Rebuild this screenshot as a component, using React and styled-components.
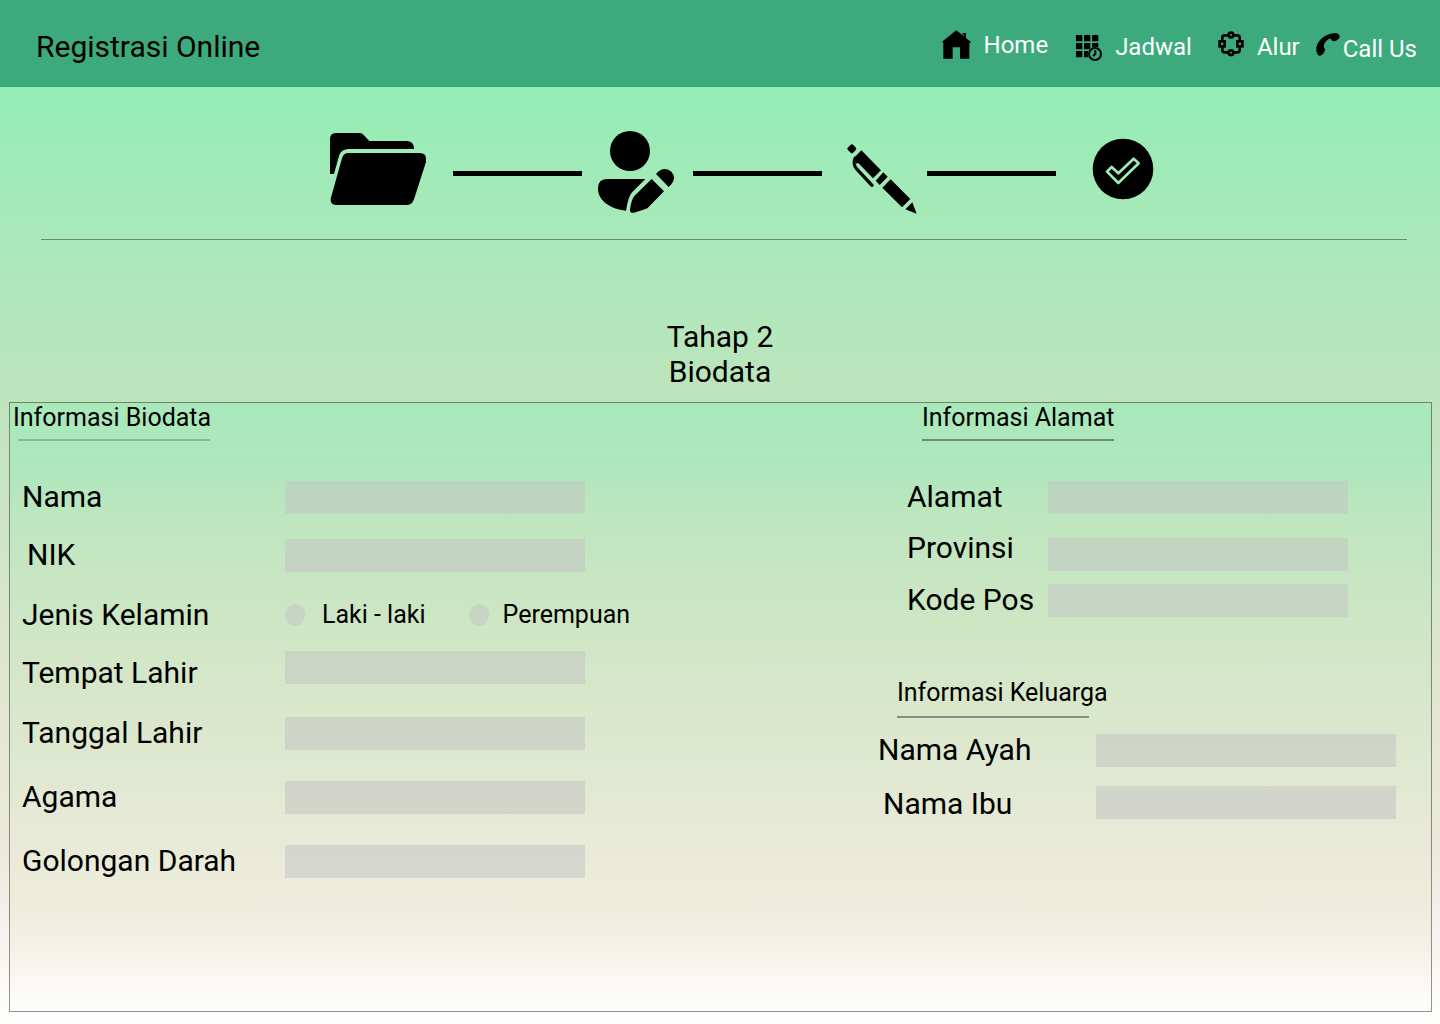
import React from "react";
import styled, { createGlobalStyle } from "styled-components";

const GlobalStyle = createGlobalStyle`
  *, *::before, *::after { box-sizing: border-box; }
  body { margin: 0; font-family: Roboto, "Liberation Sans", sans-serif; color: #000; }
`;

const Page = styled.div`
  display: flex;
  flex-direction: column;
  min-height: 100vh;
  padding-bottom: 12px;
  background: linear-gradient(180deg, #94edb5 8%, #c0e4bd 40%, #dbe6cd 62%, #ebe9d9 82%, #f6f4ee 92%, #fffffe 100%);
`;

const Header = styled.header`
  display: flex;
  align-items: center;
  justify-content: space-between;
  height: 87px;
  padding: 6px 23px 0 36px;
  background: #3daa7e;
`;

const Brand = styled.h1`
  margin: 0;
  font-size: 30px;
  line-height: 35px;
  font-weight: 400;
`;

const Nav = styled.nav`
  display: flex;
  gap: 28px;
  height: 34px;
`;

const NavGroup = styled.div`
  display: flex;
  gap: ${(p) => p.$gap}px;
`;

const NavLink = styled.a`
  display: flex;
  gap: ${(p) => (p.$tight ? 3 : 13)}px;
  color: #fff;
  font-size: 24px;
  line-height: 30px;
  text-decoration: none;
  white-space: nowrap;
`;

const NavText = styled.span`
  align-self: ${(p) => p.$align || "center"};
`;

const NavIcon = styled.svg`
  flex: none;
  align-self: ${(p) => p.$align || "flex-start"};
`;

const Steps = styled.section`
  display: flex;
  justify-content: center;
  align-items: center;
  margin: 0 33px 0 41px;
  padding: 33px 8px 19px 0;
  border-bottom: 1px solid rgba(0, 0, 0, 0.4);
`;

const StepIcon = styled.svg`
  flex: none;
  display: block;
`;

const StepLine = styled.span`
  width: 129px;
  height: 5px;
  margin-top: 7px;
  background: #000;
`;

const StageTitle = styled.h2`
  margin: 79px 0 13px;
  font-size: 30px;
  line-height: 35px;
  font-weight: 400;
  text-align: center;
`;

const Panel = styled.form`
  flex: 1;
  display: flex;
  justify-content: space-between;
  margin: 0 8px 0 9px;
  border: 1px solid rgba(0, 0, 0, 0.42);
  background: linear-gradient(180deg, #a8e9ba 0%, #afe7bd 10%, #bfe6bf 20%, #cce6c3 34%, #d9e7cb 50%, #e5e9d5 68%, #efeddd 84%, #f4f2e8 90%, #fefefe 100%);
  background-clip: padding-box;
`;

const Column = styled.div`
  display: flex;
  flex-direction: column;
  flex: 0 0 ${(p) => p.$width}px;
`;

const Group = styled.section`
  display: flex;
  flex-direction: column;
  padding-left: ${(p) => p.$inset}px;
`;

const GroupTitle = styled.h3`
  margin: 0 0 ${(p) => p.$after}px ${(p) => p.$inset}px;
  font-size: 25px;
  line-height: 30px;
  font-weight: 400;

  &::after {
    content: "";
    display: block;
    width: 192px;
    height: 2px;
    margin: ${(p) => p.$space}px 0 0 ${(p) => p.$shift || 0}px;
    background: rgba(0, 0, 0, ${(p) => (p.$soft ? 0.2 : 0.38)});
  }
`;

const Row = styled.div`
  display: flex;
  align-items: center;
  min-height: ${(p) => p.$height || 35}px;
  margin-bottom: ${(p) => p.$after || 0}px;
`;

const Label = styled.label`
  flex: 0 0 ${(p) => p.$width}px;
  align-self: ${(p) => p.$align || "center"};
  padding-left: ${(p) => (p.$indent ? 5 : 0)}px;
  font-size: 30px;
  line-height: 35px;
  white-space: nowrap;
`;

const Field = styled.input`
  width: 300px;
  height: 33px;
  align-self: ${(p) => p.$align || "flex-end"};
  padding: 0 8px;
  border: 0;
  border-radius: 0;
  background: rgba(196, 196, 196, 0.54);
  font: inherit;
  font-size: 20px;
`;

const Choice = styled.label`
  display: flex;
  align-items: center;
  gap: ${(p) => p.$gap}px;
  margin-right: 43px;
  font-size: 25px;
  line-height: 30px;
  white-space: nowrap;
`;

const Radio = styled.input`
  appearance: none;
  width: 20px;
  height: 22px;
  margin: 0;
  border-radius: 50%;
  background: rgba(196, 196, 196, 0.54);

  &:checked { background: #3daa7e; }
`;

function HomeIcon() {
  return (
    <NavIcon width="29" height="29" viewBox="62 57 87 87" aria-hidden="true">
      <path d="M62 92 105 58 122 71V66H134V81L149 93 144 97V143H116V109H94V143H66V97Z" fill="#000" />
      <path d="M121 66 128 75" stroke="#3daa7e" strokeWidth="3" />
    </NavIcon>
  );
}

function ScheduleIcon() {
  const cells = [0, 24, 48];
  return (
    <NavIcon $align="flex-end" width="26" height="29" viewBox="468 75 78 87" aria-hidden="true">
      {cells.map((y) => cells.map((x) => <rect key={`${x}-${y}`} x={468 + x} y={75 + y} width="19" height="19" rx="2" />))}
      <circle cx="525" cy="132" r="22" fill="#3daa7e" />
      <circle cx="525" cy="132" r="18" fill="none" stroke="#000" strokeWidth="6" />
      <path d="M526 120V132L519 138" fill="none" stroke="#000" strokeWidth="6" />
    </NavIcon>
  );
}

function FlowIcon() {
  return (
    <NavIcon width="26" height="28" viewBox="114 60 78 84" aria-hidden="true">
      <g fill="none" stroke="#000" strokeWidth="8">
        <circle cx="153" cy="75" r="7" />
        <circle cx="153" cy="128" r="7" />
        <rect x="119" y="94" width="15" height="15" />
        <rect x="172" y="94" width="15" height="15" />
        <path d="M146 76H134Q127 76 127 83V94M160 76H172Q179 76 179 83V94M127 109V120Q127 127 134 127H146M179 109V120Q179 127 172 127H160" />
      </g>
    </NavIcon>
  );
}

function PhoneIcon() {
  return (
    <NavIcon width="24" height="28" viewBox="406 60 72 84" aria-hidden="true">
      <path d="M407 113C410 88 440 70 463 69C473 69 478 76 477 81C474 91 462 95 456 93C450 90 450 85 446 86C438 90 430 99 429 108C430 114 434 116 433 120C430 130 425 137 417 137C410 136 406 125 407 113Z" />
    </NavIcon>
  );
}

function FolderStep() {
  return (
    <StepIcon width="167" height="100" viewBox="-102 0 501 300" role="img" aria-label="Berkas">
      <path d="M30 162V57Q30 39 48 39H120Q126 39 131 45L148 63H262Q282 65 282 87H85Q66 88 58 104L42 162Z" />
      <path d="M86 99H300Q318 100 318 116V126L282 238Q276 255 262 255H48Q30 254 32 236L66 115Q70 99 86 99Z" />
    </StepIcon>
  );
}

function BiodataStep() {
  return (
    <StepIcon width="111" height="100" viewBox="6 0 333 300" role="img" aria-label="Biodata">
      <circle cx="150" cy="93" r="60" />
      <path d="M80 177H196L157 216Q145 228 138 272C90 268 54 240 54 207V203Q55 178 80 177Z" />
      <path d="M215 177 252 214 203 264Q198 268 162 278Q149 280 150 269Q154 238 163 228Z" />
      <path d="M228 162Q240 147 255 147A27 27 0 0 1 282 174Q282 187 266 201Z" />
    </StepIcon>
  );
}

function PenStep() {
  return (
    <StepIcon width="105" height="100" viewBox="-24 0 315 300" role="img" aria-label="Formulir">
      <path d="M53 83 62 74Q66 71 70 75L78 83Q80 87 77 90L69 99Q65 101 62 98L53 89Q51 86 53 83Z" />
      <path d="M94 91 153 151 129 175 87 131Q82 126 79 132L71 115Z" />
      <path d="M76 114C70 124 72 138 80 147L126 196" fill="none" stroke="#000" strokeWidth="10" strokeLinecap="round" />
      <path d="M160 157 173 170 149 195 137 182ZM182 178 241 237 216 262 157 203ZM247 247 260 281 226 268Z" />
    </StepIcon>
  );
}

function DoneStep() {
  return (
    <StepIcon width="98" height="100" viewBox="678 0 294 300" role="img" aria-label="Selesai">
      <circle cx="879" cy="147" r="91" />
      <path d="M831 155 845 141 865 160 911 116 926 130 865 189Z" fill="none" stroke="#9ee9b8" strokeWidth="8" strokeLinejoin="round" />
    </StepIcon>
  );
}

function TextRow({ id, label, labelWidth, after, height, indent, labelAlign, fieldAlign }) {
  return (
    <Row $after={after} $height={height}>
      <Label htmlFor={id} $width={labelWidth} $indent={indent} $align={labelAlign}>{label}</Label>
      <Field id={id} name={id} type="text" $align={fieldAlign} />
    </Row>
  );
}

export default function App() {
  return (
    <>
      <GlobalStyle />
      <Page>
        <Header>
          <Brand>Registrasi Online</Brand>
          <Nav>
            <NavLink href="#home"><HomeIcon /><NavText $align="flex-start">Home</NavText></NavLink>
            <NavGroup $gap={26}>
              <NavLink href="#jadwal"><ScheduleIcon /><NavText>Jadwal</NavText></NavLink>
              <NavGroup $gap={16}>
                <NavLink href="#alur"><FlowIcon /><NavText>Alur</NavText></NavLink>
                <NavLink href="#call" $tight><PhoneIcon /><NavText $align="flex-end">Call Us</NavText></NavLink>
              </NavGroup>
            </NavGroup>
          </Nav>
        </Header>

        <Steps>
          <FolderStep />
          <StepLine />
          <BiodataStep />
          <StepLine />
          <PenStep />
          <StepLine />
          <DoneStep />
        </Steps>

        <StageTitle>Tahap 2<br />Biodata</StageTitle>

        <Panel>
          <Column $width={640}>
            <Group $inset={12}>
              <GroupTitle $inset={-9} $shift={5} $space={6} $after={38} $soft>Informasi Biodata</GroupTitle>
              <TextRow id="nama" label="Nama" labelWidth={263} after={23} />
              <TextRow id="nik" label="NIK" labelWidth={263} after={25} indent />
              <Row role="radiogroup" aria-labelledby="jenis" $after={19}>
                <Label as="span" id="jenis" $width={263}>Jenis Kelamin</Label>
                <Choice $gap={17}><Radio type="radio" name="jenis" value="l" />Laki - laki</Choice>
                <Choice $gap={14}><Radio type="radio" name="jenis" value="p" />Perempuan</Choice>
              </Row>
              <TextRow id="tempat" label="Tempat Lahir" labelWidth={263} after={25} height={39} labelAlign="flex-end" fieldAlign="flex-start" />
              <TextRow id="tanggal" label="Tanggal Lahir" labelWidth={263} after={29} />
              <TextRow id="agama" label="Agama" labelWidth={263} after={29} />
              <TextRow id="darah" label="Golongan Darah" labelWidth={263} />
            </Group>
          </Column>

          <Column $width={553}>
            <Group $inset={29}>
              <GroupTitle $inset={15} $space={6} $after={38}>Informasi Alamat</GroupTitle>
              <TextRow id="alamat" label="Alamat" labelWidth={141} after={16} />
              <TextRow id="provinsi" label="Provinsi" labelWidth={141} after={11} height={41} labelAlign="flex-start" />
              <TextRow id="kodepos" label="Kode Pos" labelWidth={141} after={61} />
            </Group>
            <Group $inset={0}>
              <GroupTitle $inset={19} $space={8} $after={14}>Informasi Keluarga</GroupTitle>
              <TextRow id="ayah" label="Nama Ayah" labelWidth={218} after={19} />
              <TextRow id="ibu" label="Nama Ibu" labelWidth={218} indent fieldAlign="flex-start" />
            </Group>
          </Column>
        </Panel>
      </Page>
    </>
  );
}
